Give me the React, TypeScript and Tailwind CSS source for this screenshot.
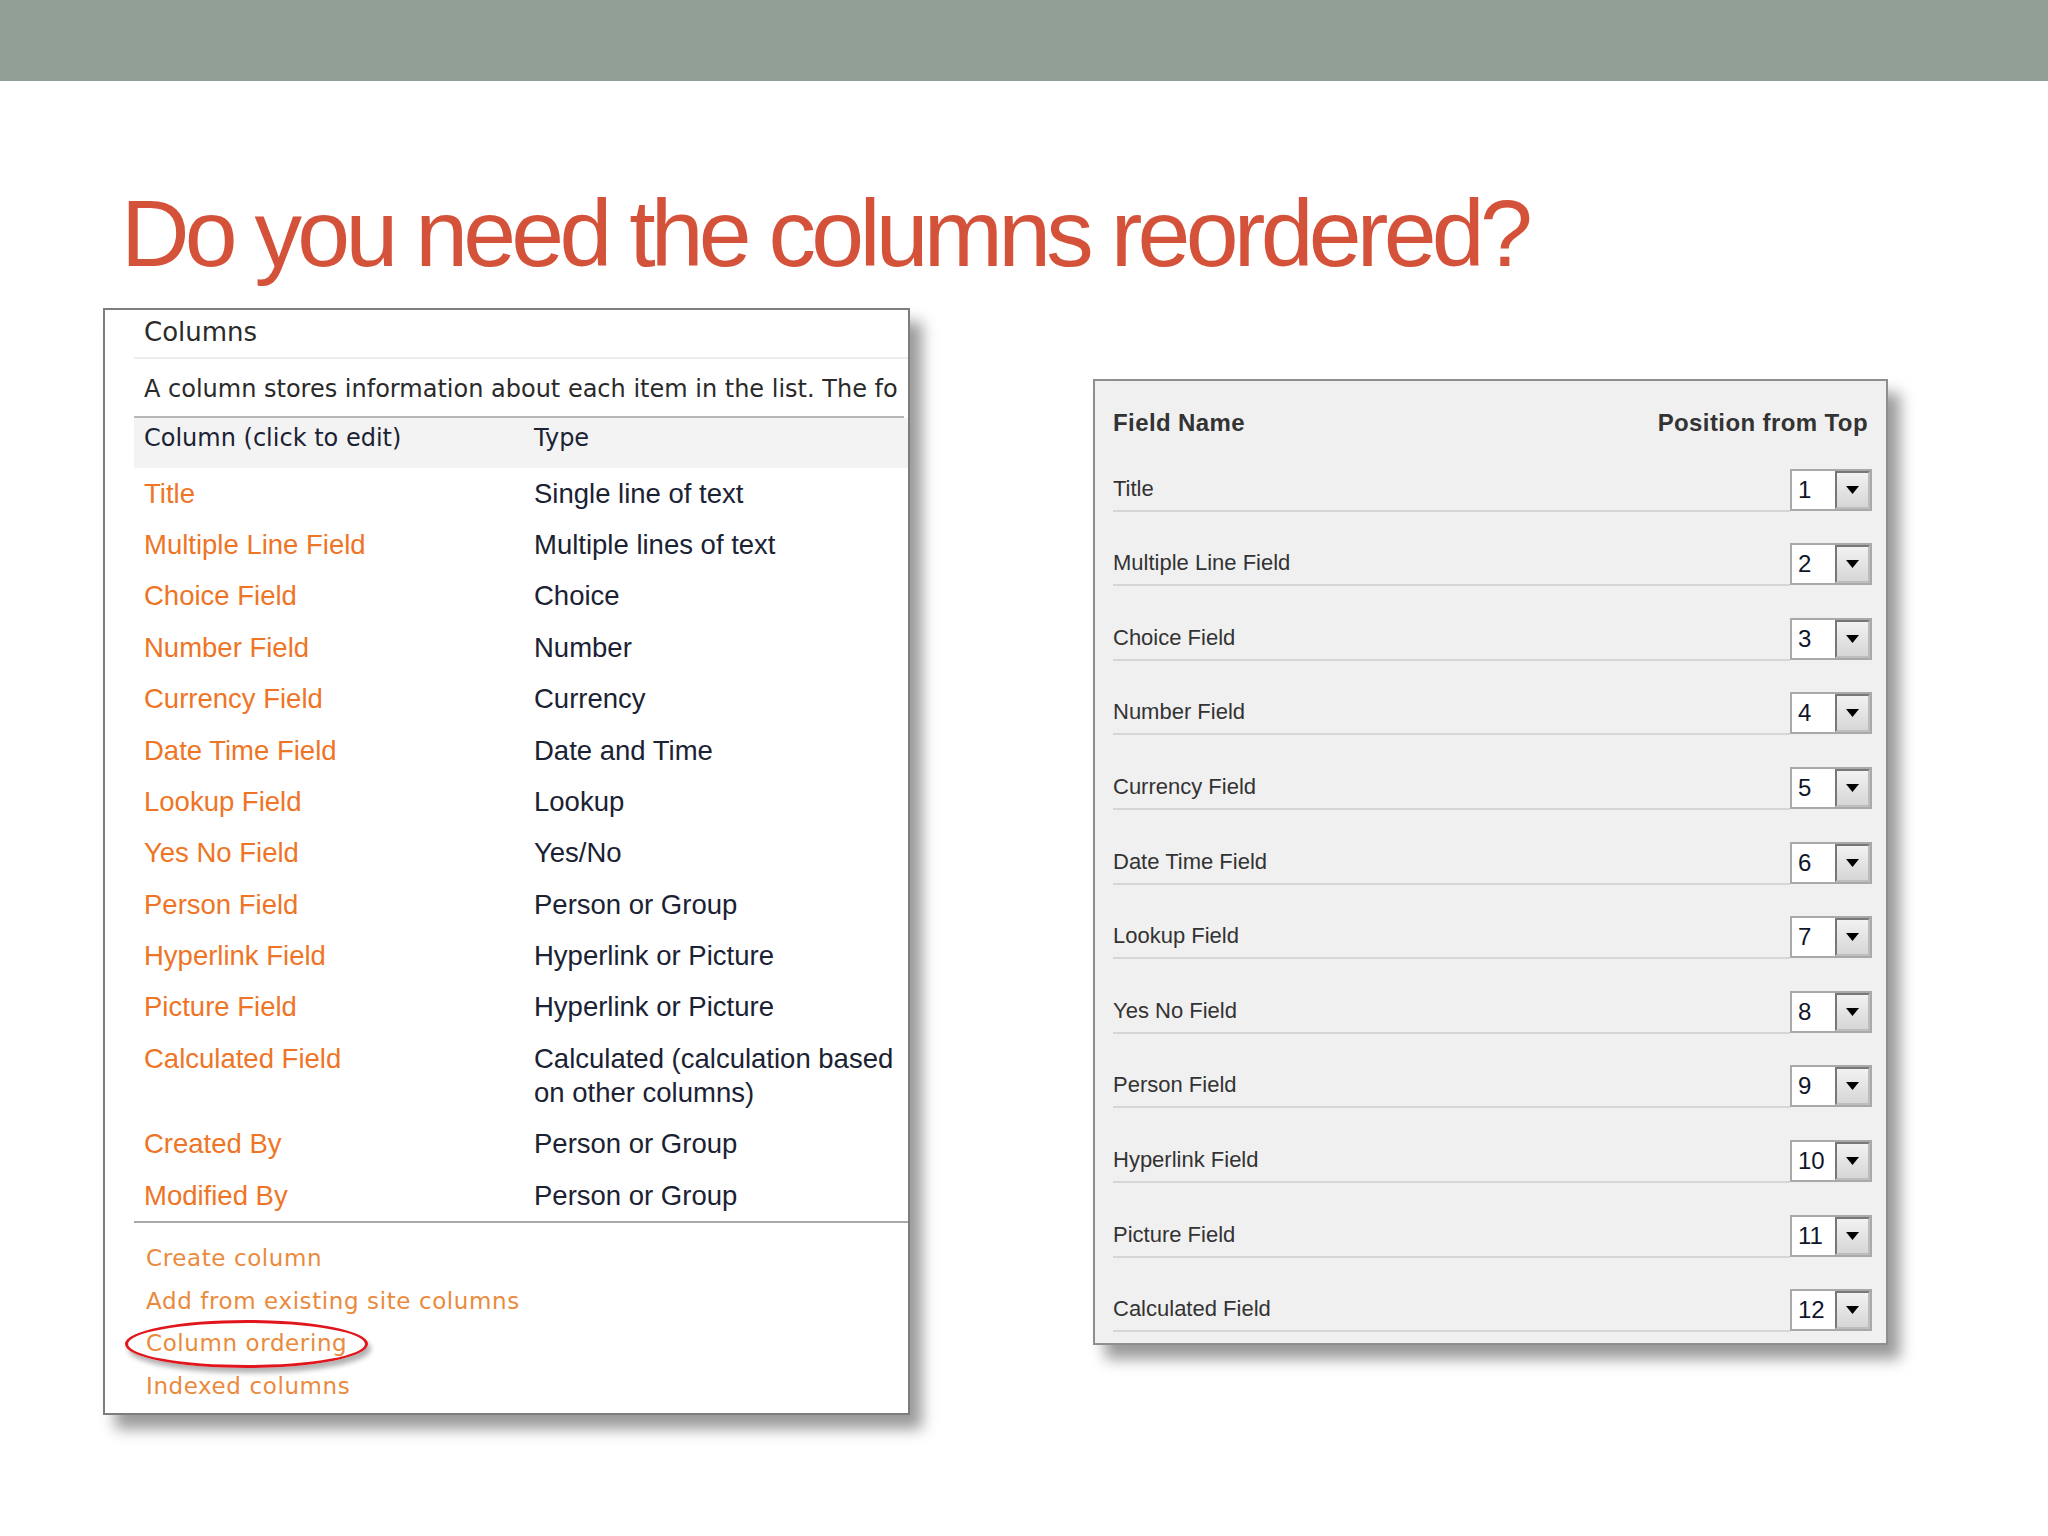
const columns: [string, string[]][] = [
  ["Title", ["Single line of text"]],
  ["Multiple Line Field", ["Multiple lines of text"]],
  ["Choice Field", ["Choice"]],
  ["Number Field", ["Number"]],
  ["Currency Field", ["Currency"]],
  ["Date Time Field", ["Date and Time"]],
  ["Lookup Field", ["Lookup"]],
  ["Yes No Field", ["Yes/No"]],
  ["Person Field", ["Person or Group"]],
  ["Hyperlink Field", ["Hyperlink or Picture"]],
  ["Picture Field", ["Hyperlink or Picture"]],
  ["Calculated Field", ["Calculated (calculation based", "on other columns)"]],
  ["Created By", ["Person or Group"]],
  ["Modified By", ["Person or Group"]],
];

const fields = [
  "Title",
  "Multiple Line Field",
  "Choice Field",
  "Number Field",
  "Currency Field",
  "Date Time Field",
  "Lookup Field",
  "Yes No Field",
  "Person Field",
  "Hyperlink Field",
  "Picture Field",
  "Calculated Field",
];

const links = ["Create column", "Add from existing site columns", "Column ordering", "Indexed columns"];

function PositionSelect({ value }: { value: number }) {
  return (
    <div className="mb-[1px] flex h-[42px] w-[82px] shrink-0 border-2 border-[#a9a9a9] bg-white">
      <div className="flex w-[43px] items-center pl-[6px] font-['Liberation_Sans',Arial,sans-serif] text-[24px] leading-[24px] text-[#10162a]">
        {value}
      </div>
      <div className="flex flex-1 items-center justify-center border-2 border-t-[#777] border-l-[#777] border-r-[#bdbdbd] border-b-[#bdbdbd] bg-gradient-to-b from-[#f2f2f2] to-[#d6d6d6]">
        <svg width="13" height="8" viewBox="0 0 13 8">
          <path d="M0 0 H13 L6.5 8 Z" fill="#000" />
        </svg>
      </div>
    </div>
  );
}

function ColumnsPanel() {
  return (
    <div className="relative h-[1107px] w-[807px] shrink-0 overflow-hidden border-2 border-[#7d7d7d] bg-white shadow-[12px_14px_14px_rgba(0,0,0,0.4)]">
      <div className="ml-[29px] w-[900px] font-['DejaVu_Sans',Verdana,sans-serif]">
        <div className="border-b-2 border-[#ececec] pt-[7px] pb-[10px] pl-[10px] text-[26px] leading-[30px] text-[#2a2a2a]">
          Columns
        </div>
        <div className="w-[770px] overflow-hidden whitespace-nowrap border-b-2 border-[#b8b8b8] pt-[16px] pb-[13px] pl-[10px] text-[24px] leading-[28px] text-[#2a2a2a]">
          A column stores information about each item in the list. The fo
        </div>
        <div className="grid h-[50px] grid-cols-[400px_1fr] bg-[#f3f3f3] pt-[6px] text-[24px] leading-[28px] text-[#1a2233]">
          <div className="pl-[10px]">Column (click to edit)</div>
          <div>Type</div>
        </div>
        <div className="font-['Liberation_Sans',Arial,sans-serif] text-[27.5px] leading-[34px]">
          {columns.map(([name, type]) => (
            <div key={name} className="grid grid-cols-[400px_1fr] py-[8.7px]">
              <div className="pl-[10px] text-[#ee7526]">{name}</div>
              <div className="text-[#1a2233]">
                {type.map((line) => (
                  <div key={line}>{line}</div>
                ))}
              </div>
            </div>
          ))}
        </div>
        <div className="border-t-2 border-[#a9a9a9] pt-[14px] pl-[12px] text-[23px] leading-[42.5px] tracking-[0.6px] text-[#ea8a3c]">
          {links.map((l) => (
            <div key={l}>{l}</div>
          ))}
        </div>
      </div>
      <div className="absolute left-[20px] top-[1010px] h-[48px] w-[243px] rounded-[50%] border-[3px] border-[#e0161c] shadow-[3px_5px_5px_rgba(0,0,0,0.3)]" />
    </div>
  );
}

function OrderPanel() {
  return (
    <div className="ml-[183px] mt-[71px] h-[966px] w-[795px] shrink-0 border-2 border-[#8e8e8e] bg-[#f0f0f0] pl-[18px] pr-[14px] font-['Liberation_Sans',Arial,sans-serif] shadow-[12px_14px_14px_rgba(0,0,0,0.4)]">
      <div className="flex h-[56px] items-end justify-between pb-[2px] pr-[4px] text-[24px] font-bold leading-[24px] tracking-[0.4px] text-[#333]">
        <span>Field Name</span>
        <span>Position from Top</span>
      </div>
      {fields.map((f, i) => (
        <div key={f} className="flex h-[74.6px] items-end">
          <div className="flex-1 border-b-2 border-[#d6d6d6] pb-[10px] text-[22px] leading-[22px] text-[#333]">
            {f}
          </div>
          <PositionSelect value={i + 1} />
        </div>
      ))}
    </div>
  );
}

export default function App() {
  return (
    <div className="h-[1536px] w-[2048px] overflow-hidden bg-white">
      <div className="h-[81px] bg-[#919f97]" />
      <h1 className="mt-[105px] pl-[121px] font-['Liberation_Sans',Arial,sans-serif] text-[95px] leading-[95px] tracking-[-0.05em] whitespace-nowrap text-[#d5523a]">
        Do you need the columns reordered?
      </h1>
      <div className="mt-[27px] flex items-start pl-[103px]">
        <ColumnsPanel />
        <OrderPanel />
      </div>
    </div>
  );
}
